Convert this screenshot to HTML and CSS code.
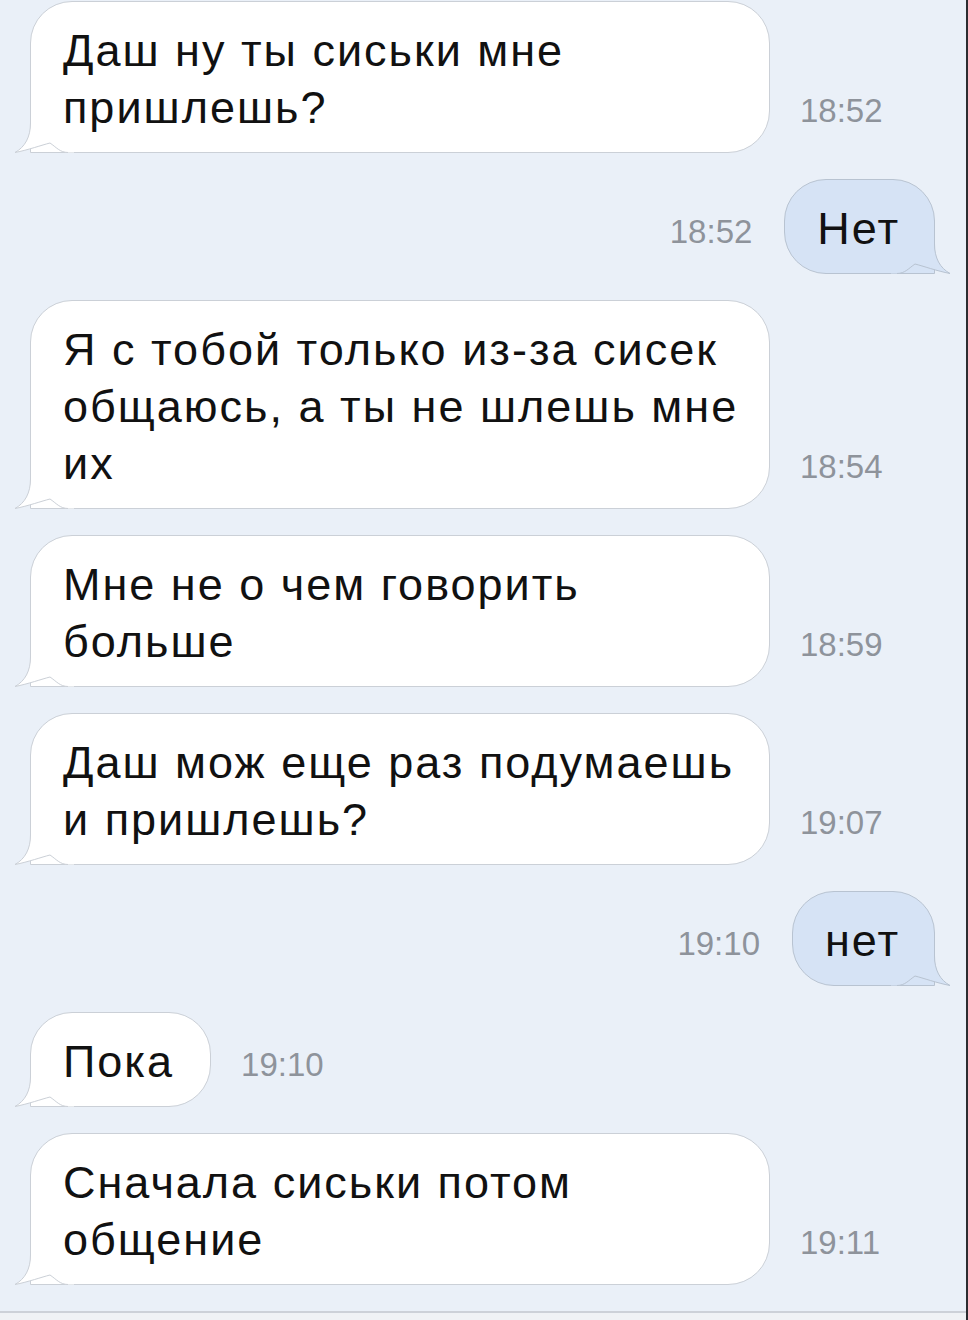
FILE: index.html
```html
<!DOCTYPE html>
<html>
<head>
  <meta charset="utf-8">
  <title>Переписка</title>
  <link rel="stylesheet" href="styles.css">
</head>
<body>
  <div class="screen">
    <div class="chat">

      <div class="row in">
        <div class="bubble">
          <svg class="tail" viewBox="0 0 60 50"><path class="tail-fill" d="M16.5 0 L16.5 20 C16.5 34 11 44 1 49.5 C14 47 28 42 36 40 C42 44 46 49.5 54 49.5 L60 49.5 L60 0 Z"/><path class="tail-line" d="M16.5 0 L16.5 20 C16.5 34 11 44 1 49.5 C14 47 28 42 36 40 C42 44 46 49.5 54 49.5"/></svg>
          <span class="text">Даш ну ты сиськи мне пришлешь?</span>
        </div>
        <span class="time">18:52</span>
      </div>

      <div class="row out">
        <span class="time">18:52</span>
        <div class="bubble">
          <svg class="tail" viewBox="0 0 60 50"><path class="tail-fill" d="M16.5 0 L16.5 20 C16.5 34 11 44 1 49.5 C14 47 28 42 36 40 C42 44 46 49.5 54 49.5 L60 49.5 L60 0 Z"/><path class="tail-line" d="M16.5 0 L16.5 20 C16.5 34 11 44 1 49.5 C14 47 28 42 36 40 C42 44 46 49.5 54 49.5"/></svg>
          <span class="text">Нет</span>
        </div>
      </div>

      <div class="row in">
        <div class="bubble">
          <svg class="tail" viewBox="0 0 60 50"><path class="tail-fill" d="M16.5 0 L16.5 20 C16.5 34 11 44 1 49.5 C14 47 28 42 36 40 C42 44 46 49.5 54 49.5 L60 49.5 L60 0 Z"/><path class="tail-line" d="M16.5 0 L16.5 20 C16.5 34 11 44 1 49.5 C14 47 28 42 36 40 C42 44 46 49.5 54 49.5"/></svg>
          <span class="text">Я с тобой только из-за сисек общаюсь, а ты не шлешь мне их</span>
        </div>
        <span class="time">18:54</span>
      </div>

      <div class="row in">
        <div class="bubble">
          <svg class="tail" viewBox="0 0 60 50"><path class="tail-fill" d="M16.5 0 L16.5 20 C16.5 34 11 44 1 49.5 C14 47 28 42 36 40 C42 44 46 49.5 54 49.5 L60 49.5 L60 0 Z"/><path class="tail-line" d="M16.5 0 L16.5 20 C16.5 34 11 44 1 49.5 C14 47 28 42 36 40 C42 44 46 49.5 54 49.5"/></svg>
          <span class="text">Мне не о чем говорить больше</span>
        </div>
        <span class="time">18:59</span>
      </div>

      <div class="row in">
        <div class="bubble">
          <svg class="tail" viewBox="0 0 60 50"><path class="tail-fill" d="M16.5 0 L16.5 20 C16.5 34 11 44 1 49.5 C14 47 28 42 36 40 C42 44 46 49.5 54 49.5 L60 49.5 L60 0 Z"/><path class="tail-line" d="M16.5 0 L16.5 20 C16.5 34 11 44 1 49.5 C14 47 28 42 36 40 C42 44 46 49.5 54 49.5"/></svg>
          <span class="text">Даш мож еще раз подумаешь и пришлешь?</span>
        </div>
        <span class="time">19:07</span>
      </div>

      <div class="row out">
        <span class="time">19:10</span>
        <div class="bubble">
          <svg class="tail" viewBox="0 0 60 50"><path class="tail-fill" d="M16.5 0 L16.5 20 C16.5 34 11 44 1 49.5 C14 47 28 42 36 40 C42 44 46 49.5 54 49.5 L60 49.5 L60 0 Z"/><path class="tail-line" d="M16.5 0 L16.5 20 C16.5 34 11 44 1 49.5 C14 47 28 42 36 40 C42 44 46 49.5 54 49.5"/></svg>
          <span class="text">нет</span>
        </div>
      </div>

      <div class="row in">
        <div class="bubble short">
          <svg class="tail" viewBox="0 0 60 50"><path class="tail-fill" d="M16.5 0 L16.5 20 C16.5 34 11 44 1 49.5 C14 47 28 42 36 40 C42 44 46 49.5 54 49.5 L60 49.5 L60 0 Z"/><path class="tail-line" d="M16.5 0 L16.5 20 C16.5 34 11 44 1 49.5 C14 47 28 42 36 40 C42 44 46 49.5 54 49.5"/></svg>
          <span class="text">Пока</span>
        </div>
        <span class="time">19:10</span>
      </div>

      <div class="row in">
        <div class="bubble">
          <svg class="tail" viewBox="0 0 60 50"><path class="tail-fill" d="M16.5 0 L16.5 20 C16.5 34 11 44 1 49.5 C14 47 28 42 36 40 C42 44 46 49.5 54 49.5 L60 49.5 L60 0 Z"/><path class="tail-line" d="M16.5 0 L16.5 20 C16.5 34 11 44 1 49.5 C14 47 28 42 36 40 C42 44 46 49.5 54 49.5"/></svg>
          <span class="text">Сначала сиськи потом общение</span>
        </div>
        <span class="time">19:11</span>
      </div>

    </div>
    <div class="footer"></div>
  </div>
</body>
</html>
```

FILE: styles.css
```css
body {
  margin: 0;
  padding: 0;
  font-family: "Liberation Sans", Arial, Helvetica, sans-serif;
  background: #eaf0f8;
}
.screen {
  display: flex;
  flex-direction: column;
  width: 968px;
  height: 1320px;
  box-sizing: border-box;
  border-right: 2px solid #2b2c30;
  background: #eaf0f8;
  overflow: hidden;
}
.chat {
  flex: 1;
  display: flex;
  flex-direction: column;
  gap: 26px;
  padding-top: 1px;
}
.row {
  display: flex;
  align-items: flex-end;
}
.row.in {
  padding-left: 30px;
}
.row.out {
  justify-content: flex-end;
  padding-right: 31px;
}
.bubble {
  position: relative;
  box-sizing: border-box;
  max-width: 740px;
  padding: 20px 22px 16px 32px;
  font-size: 45px;
  line-height: 57px;
  letter-spacing: 2px;
  color: #111;
  background: #fff;
  border: 1px solid #cbd0d7;
  border-radius: 42px;
  border-bottom-left-radius: 0;
}
.bubble.short {
  padding-right: 36px;
}
.out .bubble {
  padding: 20px 34px 16px 32px;
  background: #d6e3f5;
  border-color: #b8c3d1;
  border-bottom-left-radius: 42px;
  border-bottom-right-radius: 0;
}
.text {
  position: relative;
}
.tail {
  position: absolute;
  left: -17px;
  bottom: -1px;
  width: 60px;
  height: 50px;
  overflow: visible;
}
.out .tail {
  left: auto;
  right: -17px;
  transform: scaleX(-1);
}
.tail-fill {
  fill: #fff;
}
.tail-line {
  fill: none;
  stroke: #cbd0d7;
  stroke-width: 1;
}
.out .tail-fill {
  fill: #d6e3f5;
}
.out .tail-line {
  stroke: #b8c3d1;
}
.time {
  flex-shrink: 0;
  font-size: 33px;
  line-height: 36px;
  color: #8e939b;
  margin-bottom: 24px;
}
.in .time {
  margin-left: 30px;
}
.out .time {
  margin-right: 32px;
}
.footer {
  height: 7px;
  border-top: 2px solid #cdd1d8;
  background: #f0f2f5;
}
```
